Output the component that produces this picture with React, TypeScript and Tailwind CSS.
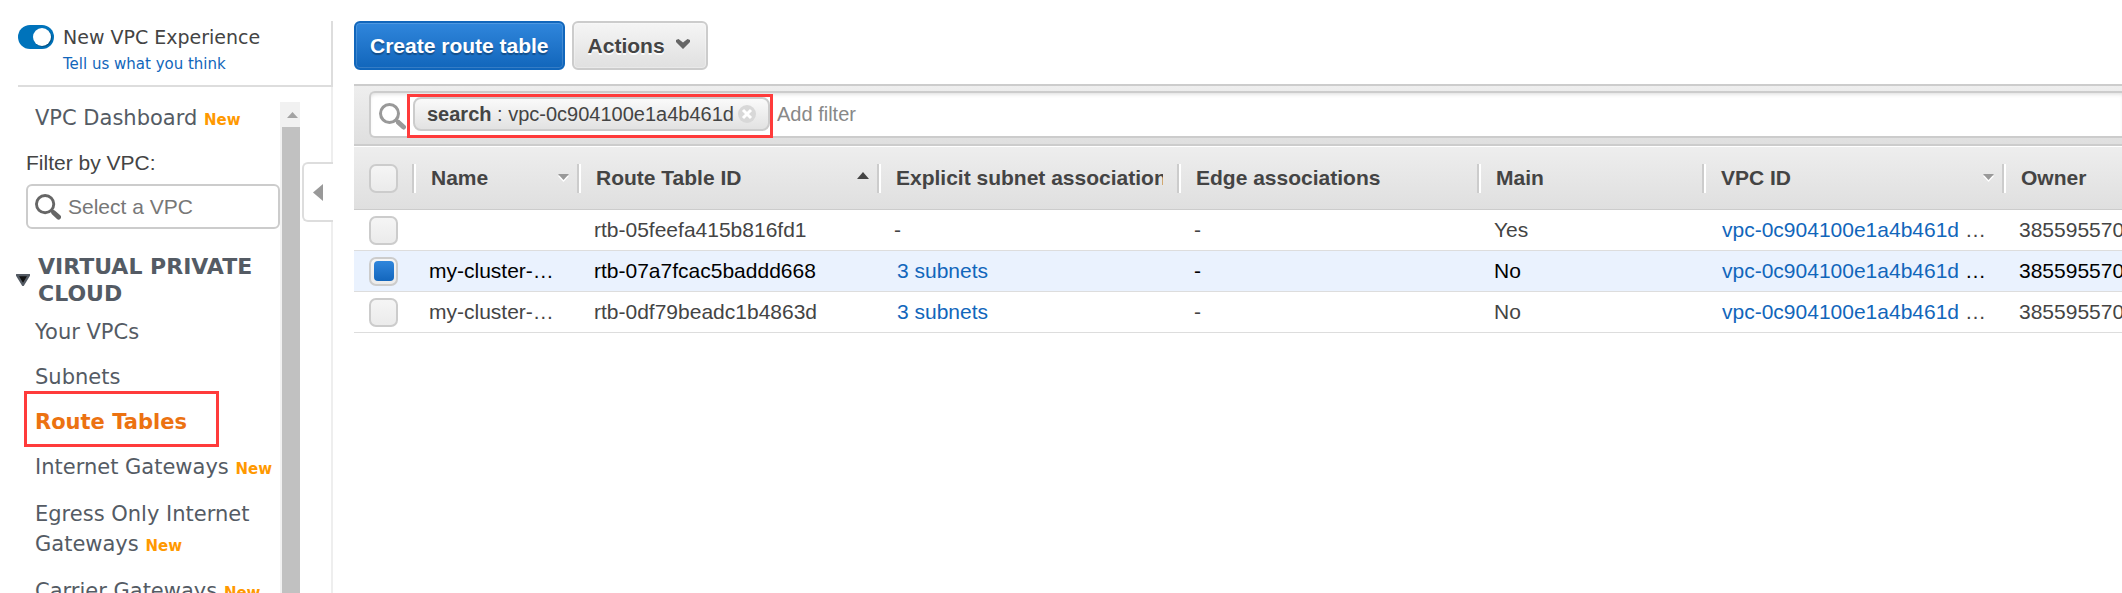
import { useState } from "react";

type NavItem = { label: string; isNew?: boolean; active?: boolean };

const navItems: NavItem[] = [
  { label: "Your VPCs" },
  { label: "Subnets" },
  { label: "Route Tables", active: true },
  { label: "Internet Gateways", isNew: true },
  { label: "Egress Only Internet Gateways", isNew: true },
  { label: "Carrier Gateways", isNew: true },
];

type Row = {
  name: string;
  id: string;
  subnets: string | null;
  main: string;
};

const rows: Row[] = [
  { name: "", id: "rtb-05feefa415b816fd1", subnets: null, main: "Yes" },
  { name: "my-cluster-…", id: "rtb-07a7fcac5baddd668", subnets: "3 subnets", main: "No" },
  { name: "my-cluster-…", id: "rtb-0df79beadc1b4863d", subnets: "3 subnets", main: "No" },
];

const vpcId = "vpc-0c904100e1a4b461d";
const owner = "385595570";

const columns: { label: string; sort?: "asc" | "none" }[] = [
  { label: "Name", sort: "none" },
  { label: "Route Table ID", sort: "asc" },
  { label: "Explicit subnet associations" },
  { label: "Edge associations" },
  { label: "Main" },
  { label: "VPC ID", sort: "none" },
  { label: "Owner" },
];

function SearchIcon({ className }: { className: string }) {
  return (
    <svg viewBox="0 0 27 27" className={className} fill="none" stroke="currentColor" aria-hidden="true">
      <circle cx="10.500" cy="10.500" r="9" strokeWidth="3" />
      <path d="M17 17 20 19.500" strokeWidth="3.500" />
      <path d="M19.500 19.500 24.500 24" strokeWidth="5" strokeLinecap="round" />
    </svg>
  );
}

function NewBadge() {
  return <span className="text-[15px] leading-none font-bold text-[#ff9900]">New</span>;
}

function Checkbox({ label, checked, onChange }: { label: string; checked: boolean; onChange: () => void }) {
  return (
    <input
      type="checkbox"
      aria-label={label}
      checked={checked}
      onChange={onChange}
      className="grid size-[29px] appearance-none place-content-center rounded-[7px] border-2 border-[#cccccc] bg-linear-to-b from-[#f5f5f5] to-[#ebebeb] before:size-5 before:rounded-[4px] checked:before:bg-linear-to-b checked:before:from-[#2f86dc] checked:before:to-[#1266bd]"
    />
  );
}

function Sidebar() {
  const [enabled, setEnabled] = useState(true);
  return (
    <aside className="flex w-[333px] shrink-0 flex-col pt-[21px] font-['DejaVu_Sans',sans-serif]">
      <div className="ml-[18px] flex h-[66px] gap-[9px] border-r-2 border-b-2 border-[#dddddd] pt-1">
        <button
          type="button"
          role="switch"
          aria-checked={enabled}
          aria-label="New VPC Experience"
          onClick={() => setEnabled(!enabled)}
          className="flex h-6 w-9 justify-end rounded-full bg-[#0073bb] p-[3px]"
        >
          <span className="size-[18px] rounded-full bg-white shadow-[1px_1px_1px_rgba(0,0,0,0.3)]" />
        </button>
        <div>
          <div className="text-[19px] leading-[24px] whitespace-nowrap text-[#444444]">New VPC Experience</div>
          <a href="#feedback" className="block text-[15px] leading-[30px] text-[#1166bb]">
            Tell us what you think
          </a>
        </div>
      </div>

      <div className="flex min-h-0 flex-1">
        <nav className="min-w-0 flex-1 text-[21px] leading-[30px] text-[#545b64]">
          <a href="#dashboard" className="mt-4 block pl-[35px] whitespace-nowrap">
            VPC Dashboard <NewBadge />
          </a>
          <label
            htmlFor="vpc-filter"
            className="mt-[15px] block pl-[26px] font-['Liberation_Sans',sans-serif] text-[#444444]"
          >
            Filter by VPC:
          </label>
          <div className="mt-[6px] ml-[26px] flex h-[45px] items-center gap-[7px] rounded-[6px] border-2 border-[#cccccc] pl-[7px]">
            <SearchIcon className="size-[26px] shrink-0 text-[#666666]" />
            <input
              id="vpc-filter"
              type="text"
              placeholder="Select a VPC"
              className="w-full min-w-0 font-['Liberation_Sans',sans-serif] text-[21px] outline-none placeholder:text-[#777777]"
            />
          </div>
          <h2 className="mt-6 flex items-center gap-2 pl-4 text-[22px] leading-[27px] font-bold">
            <svg viewBox="0 0 14 12" className="h-3 w-[14px] shrink-0" aria-hidden="true">
              <path d="M1 1H13L7 11Z" fill="#111111" stroke="#545b64" strokeWidth="2.4" strokeLinejoin="round" />
            </svg>
            VIRTUAL PRIVATE CLOUD
          </h2>
          <ul className="mt-[10px]">
            {navItems.map((item) => (
              <li key={item.label} className={item.isNew ? "relative pb-[17px] pl-[35px]" : "relative pb-[15px] pl-[35px]"}>
                {item.active && (
                  <span className="pointer-events-none absolute -top-4 left-6 h-14 w-[195px] border-3 border-[#ff3b3b]" />
                )}
                <a href="#nav" className={item.active ? "font-bold text-[#ec7211]" : ""}>
                  {item.label} {item.isNew && <NewBadge />}
                </a>
              </li>
            ))}
          </ul>
        </nav>

        <div className="mt-[15px] flex w-5 flex-col bg-[#f1f1f1]" aria-hidden="true">
          <svg viewBox="0 0 20 25" className="h-[25px] w-5 shrink-0">
            <path d="M7 16 12.5 10 18 16Z" fill="#a3a3a3" />
          </svg>
          <div className="ml-[2px] flex-1 bg-[#c1c1c1]" />
        </div>

        <div className="flex w-[33px] flex-col items-end">
          <div className="h-[75px] w-[2px] bg-[#eeeeee]" />
          <button
            type="button"
            aria-label="Collapse navigation"
            className="flex h-[60px] w-[31px] items-center rounded-l-[6px] border-2 border-r-0 border-[#dddddd] pl-[9px]"
          >
            <svg viewBox="0 0 10 17" className="h-[17px] w-[10px]" aria-hidden="true">
              <path d="M10 0V17L0 8.500Z" fill="#999999" />
            </svg>
          </button>
          <div className="w-[2px] flex-1 bg-[#eeeeee]" />
        </div>
      </div>
    </aside>
  );
}

function Toolbar() {
  return (
    <div className="flex gap-[7px] pt-[21px] text-[21px] font-bold">
      <button
        type="button"
        className="h-[49px] rounded-[6px] border-2 border-[#1166bb] bg-linear-to-b from-[#2f86dc] to-[#1166bb] px-[14px] text-white inset-ring-1 inset-ring-white/15 text-shadow-[0_2px_1px_rgba(0,0,0,0.3)]"
      >
        Create route table
      </button>
      <button
        type="button"
        className="flex h-[49px] items-center gap-[11px] rounded-[6px] border-2 border-[#cccccc] bg-linear-to-b from-[#f5f5f5] to-[#e0e0e0] pr-4 pl-[14px] inset-ring-1 inset-ring-white/30 text-shadow-[0_2px_0_rgba(255,255,255,0.9)]"
      >
        Actions
        <svg viewBox="0 0 14 10" className="mb-[3px] h-[10px] w-[14px]" aria-hidden="true">
          <path d="M0 1 2.500 0 7 3.500 11.500 0 14 1V3L7 10 0 3Z" fill="#666666" />
        </svg>
      </button>
    </div>
  );
}

function FilterBar() {
  return (
    <div className="mt-[14px] h-[62px] border-y-2 border-[#cccccc] bg-linear-to-b from-[#eeeeee] to-[#dfdfdf] pt-[5px] pl-[15px]">
      <div className="flex h-[47px] items-center rounded-l-[6px] border-2 border-r-0 border-[#cccccc] bg-white pl-2 text-[20px] shadow-[inset_0_3px_4px_-2px_rgba(0,0,0,0.15)]">
        <SearchIcon className="mt-[3px] size-[27px] shrink-0 text-[#999999]" />
        <div className="relative mb-[2px] ml-[7px] flex h-[34px] w-[357px] shrink-0 items-center justify-between rounded-[8px] border-2 border-[#cccccc] bg-linear-to-b from-[#fafafa] to-[#e2e2e2] px-3 whitespace-nowrap">
          <span>
            <b>search</b> : {vpcId}
          </span>
          <button type="button" aria-label="Remove filter" className="size-[18px]">
            <svg viewBox="0 0 18 18" className="size-[18px]" aria-hidden="true">
              <circle cx="9" cy="9" r="9" fill="#d8d8d8" />
              <path d="M5 5 13 13M13 5 5 13" stroke="#ffffff" strokeWidth="3" />
            </svg>
          </button>
          <span className="pointer-events-none absolute -top-[5px] -left-2 h-[44px] w-[366px] border-3 border-[#ff3b3b]" />
        </div>
        <input
          type="text"
          aria-label="Add filter"
          placeholder="Add filter"
          className="mb-[2px] ml-[7px] min-w-0 flex-1 outline-none placeholder:text-[#888888]"
        />
      </div>
    </div>
  );
}

function RouteTables() {
  const [selected, setSelected] = useState<boolean[]>([false, true, false]);
  const all = selected.every(Boolean);
  return (
    <table className="w-full table-fixed border-separate border-spacing-0 text-left text-[21px] leading-[30px] whitespace-nowrap">
      <colgroup>
        <col className="w-[62px]" />
        <col className="w-[165px]" />
        <col className="w-[300px]" />
        <col className="w-[300px]" />
        <col className="w-[300px]" />
        <col className="w-[225px]" />
        <col className="w-[300px]" />
        <col />
      </colgroup>
      <thead>
        <tr className="h-16 bg-linear-to-b from-[#eeeeee] to-[#dfdfdf]">
          <th className="border-t border-b border-t-white border-b-[#cccccc] p-0">
            <div className="flex h-[29px] justify-between pl-[15px]">
              <Checkbox label="Select all" checked={all} onChange={() => setSelected(selected.map(() => !all))} />
              <span className="w-1 border-l-2 border-[#cccccc] bg-white" />
            </div>
          </th>
          {columns.map((col, i) => (
            <th key={col.label} className="border-t border-b border-t-white border-b-[#cccccc] p-0">
              <div className="flex h-[29px] items-center pl-[15px]">
                <span className={col.sort ? "flex-1" : "mr-[14px] flex-1 overflow-hidden"}>{col.label}</span>
                {col.sort === "none" && (
                  <svg viewBox="0 0 11 8" className="mr-2 h-2 w-[11px]" aria-hidden="true">
                    <path d="M0 2H11L5.500 8Z" fill="#ffffff" />
                    <path d="M0 0H11L5.500 6Z" fill="#999999" />
                  </svg>
                )}
                {col.sort === "asc" && (
                  <svg viewBox="0 0 12 8" className="mr-2 mb-1 h-2 w-3" aria-hidden="true">
                    <path d="M0 7H12L6 0Z" fill="#444444" />
                  </svg>
                )}
                {i < columns.length - 1 && (
                  <span className="w-1 shrink-0 self-stretch border-l-2 border-[#cccccc] bg-white" />
                )}
              </div>
            </th>
          ))}
        </tr>
      </thead>
      <tbody className="[&_td]:h-[41px] [&_td]:overflow-hidden [&_td]:border-b [&_td]:border-[#dddddd] [&_td]:py-0 [&_td]:pr-0 [&_td]:pl-[13px]">
        {rows.map((row, i) => (
          <tr key={row.id} className={selected[i] ? "bg-[#eaf2fe] text-black" : "text-[#444444]"}>
            <td>
              <div className="pl-[2px]">
                <Checkbox
                  label={"Select " + row.id}
                  checked={selected[i]}
                  onChange={() => setSelected(selected.map((v, j) => (j === i ? !v : v)))}
                />
              </div>
            </td>
            <td>{row.name}</td>
            <td>{row.id}</td>
            <td>
              {row.subnets ? (
                <a href="#subnets" className="pl-[3px] text-[#1166bb]">
                  {row.subnets}
                </a>
              ) : (
                "-"
              )}
            </td>
            <td>-</td>
            <td>{row.main}</td>
            <td>
              <a href="#vpc" className="pl-[3px] text-[#1166bb]">
                {vpcId}
              </a>{" "}
              …
            </td>
            <td>{owner}</td>
          </tr>
        ))}
      </tbody>
    </table>
  );
}

export default function App() {
  return (
    <div className="flex h-screen overflow-hidden bg-white font-['Liberation_Sans',sans-serif] text-[#444444]">
      <Sidebar />
      <main className="ml-[21px] min-w-0 flex-1">
        <Toolbar />
        <FilterBar />
        <RouteTables />
      </main>
    </div>
  );
}
